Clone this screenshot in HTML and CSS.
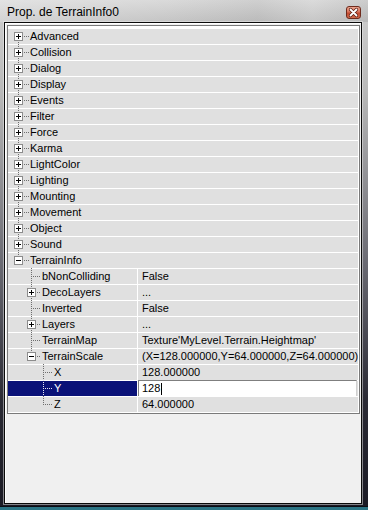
FILE: index.html
```html
<!DOCTYPE html>
<html>
<head>
<meta charset="utf-8">
<title>Prop. de TerrainInfo0</title>
<link rel="stylesheet" href="styles.css">
</head>
<body>
<svg class="defs" width="0" height="0" aria-hidden="true">
  <defs>
    <g id="bp"><rect x=".5" y=".5" width="8" height="8" fill="#fff" stroke="#8c8c8c"/><path d="M2 4.5h5M4.5 2v5" stroke="#000"/></g>
    <g id="bm"><rect x=".5" y=".5" width="8" height="8" fill="#fff" stroke="#8c8c8c"/><path d="M2 4.5h5" stroke="#000"/></g>
  </defs>
</svg>
<div class="window">
  <div class="titlebar">
    <span class="title">Prop. de TerrainInfo0</span>
    <span class="close"><svg width="13" height="11" viewBox="0 0 13 11"><path d="M3.5 2.5l6 6M9.5 2.5l-6 6" stroke="#5a1c10" stroke-width="3.2" stroke-linecap="round"/><path d="M3.5 2.5l6 6M9.5 2.5l-6 6" stroke="#fff" stroke-width="1.8" stroke-linecap="round"/></svg></span>
  </div>
  <div class="client">
    <div class="list">
      <div class="row"><svg class="g g0"><path class="dl" d="M10.5 13V15M16 7.5h5"/><use href="#bp" x="6" y="3"/></svg><span>Advanced</span></div>
      <div class="row"><svg class="g g0"><path class="dl" d="M10.5 -1V3M10.5 13V15M16 7.5h5"/><use href="#bp" x="6" y="3"/></svg><span>Collision</span></div>
      <div class="row"><svg class="g g0"><path class="dl" d="M10.5 -1V3M10.5 13V15M16 7.5h5"/><use href="#bp" x="6" y="3"/></svg><span>Dialog</span></div>
      <div class="row"><svg class="g g0"><path class="dl" d="M10.5 -1V3M10.5 13V15M16 7.5h5"/><use href="#bp" x="6" y="3"/></svg><span>Display</span></div>
      <div class="row"><svg class="g g0"><path class="dl" d="M10.5 -1V3M10.5 13V15M16 7.5h5"/><use href="#bp" x="6" y="3"/></svg><span>Events</span></div>
      <div class="row"><svg class="g g0"><path class="dl" d="M10.5 -1V3M10.5 13V15M16 7.5h5"/><use href="#bp" x="6" y="3"/></svg><span>Filter</span></div>
      <div class="row"><svg class="g g0"><path class="dl" d="M10.5 -1V3M10.5 13V15M16 7.5h5"/><use href="#bp" x="6" y="3"/></svg><span>Force</span></div>
      <div class="row"><svg class="g g0"><path class="dl" d="M10.5 -1V3M10.5 13V15M16 7.5h5"/><use href="#bp" x="6" y="3"/></svg><span>Karma</span></div>
      <div class="row"><svg class="g g0"><path class="dl" d="M10.5 -1V3M10.5 13V15M16 7.5h5"/><use href="#bp" x="6" y="3"/></svg><span>LightColor</span></div>
      <div class="row"><svg class="g g0"><path class="dl" d="M10.5 -1V3M10.5 13V15M16 7.5h5"/><use href="#bp" x="6" y="3"/></svg><span>Lighting</span></div>
      <div class="row"><svg class="g g0"><path class="dl" d="M10.5 -1V3M10.5 13V15M16 7.5h5"/><use href="#bp" x="6" y="3"/></svg><span>Mounting</span></div>
      <div class="row"><svg class="g g0"><path class="dl" d="M10.5 -1V3M10.5 13V15M16 7.5h5"/><use href="#bp" x="6" y="3"/></svg><span>Movement</span></div>
      <div class="row"><svg class="g g0"><path class="dl" d="M10.5 -1V3M10.5 13V15M16 7.5h5"/><use href="#bp" x="6" y="3"/></svg><span>Object</span></div>
      <div class="row"><svg class="g g0"><path class="dl" d="M10.5 -1V3M10.5 13V15M16 7.5h5"/><use href="#bp" x="6" y="3"/></svg><span>Sound</span></div>
      <div class="row"><svg class="g g0"><path class="dl" d="M10.5 -1V3M16 7.5h5"/><use href="#bm" x="6" y="3"/></svg><span>TerrainInfo</span></div>

      <div class="row prop"><div class="name"><svg class="g g1"><path class="dl" d="M23.5 -1V15M25 7.5h8"/></svg><span>bNonColliding</span></div><div class="value">False</div></div>
      <div class="row prop"><div class="name"><svg class="g g1"><path class="dl" d="M23.5 -1V3M23.5 13V15M29 7.5h4"/><use href="#bp" x="19" y="3"/></svg><span>DecoLayers</span></div><div class="value">...</div></div>
      <div class="row prop"><div class="name"><svg class="g g1"><path class="dl" d="M23.5 -1V15M25 7.5h8"/></svg><span>Inverted</span></div><div class="value">False</div></div>
      <div class="row prop"><div class="name"><svg class="g g1"><path class="dl" d="M23.5 -1V3M23.5 13V15M29 7.5h4"/><use href="#bp" x="19" y="3"/></svg><span>Layers</span></div><div class="value">...</div></div>
      <div class="row prop"><div class="name"><svg class="g g1"><path class="dl" d="M23.5 -1V15M25 7.5h8"/></svg><span>TerrainMap</span></div><div class="value">Texture'MyLevel.Terrain.Heightmap'</div></div>
      <div class="row prop"><div class="name"><svg class="g g1"><path class="dl" d="M23.5 -1V3M29 7.5h4"/><use href="#bm" x="19" y="3"/></svg><span>TerrainScale</span></div><div class="value">(X=128.000000,Y=64.000000,Z=64.000000)</div></div>
      <div class="row prop"><div class="name"><svg class="g g2"><path class="dl" d="M35.5 -1V15M37 7.5h8"/></svg><span>X</span></div><div class="value">128.000000</div></div>
      <div class="row prop sel"><div class="name"><svg class="g g2"><path class="dl" d="M35.5 -1V15M37 7.5h8"/></svg><span>Y</span></div><div class="value edit">128<span class="caret"></span></div></div>
      <div class="row prop"><div class="name"><svg class="g g2"><path class="dl" d="M35.5 -1V8M37 7.5h8"/></svg><span>Z</span></div><div class="value">64.000000</div></div>
    </div>
  </div>
</div>
</body>
</html>
```

FILE: styles.css
```css
html, body {
  margin: 0;
  padding: 0;
}
body {
  background: #2b7484;
  width: 368px;
  height: 510px;
  overflow: hidden;
}
.defs {
  position: absolute;
  width: 0;
  height: 0;
}
.window {
  width: 368px;
  height: 507px;
  box-sizing: border-box;
  padding: 0 6px 3px 4px;
  display: flex;
  flex-direction: column;
  background: linear-gradient(180deg, #cfcfcf 0, #b9b9b9 90px, #6c6c74 260px, #2a2a34 400px, #1a1a24 507px);
  box-shadow: inset 0 -1px 0 #0c0c14;
}
.titlebar {
  height: 22px;
  margin: 0 -6px 0 -4px;
  padding: 0 7px 0 7px;
  box-sizing: border-box;
  display: flex;
  justify-content: space-between;
  align-items: flex-start;
  background:
    linear-gradient(90deg, rgba(255,255,255,0.28) 0, rgba(255,255,255,0.05) 45%, rgba(0,0,0,0.04) 70%, rgba(255,255,255,0.08) 85%, rgba(0,0,0,0.05) 100%),
    linear-gradient(180deg, #d8d8d8, #c2c2c2);
}
.title {
  font: 12px "Liberation Sans", Arial, sans-serif;
  color: #000;
  line-height: 19px;
  padding-top: 3px;
}
.close {
  width: 15px;
  height: 13px;
  margin-top: 6px;
  box-sizing: border-box;
  border: 1px solid #6e2a1c;
  border-radius: 3px;
  background: linear-gradient(180deg, #eba48f 0, #d9735a 45%, #c24a30 55%, #cf6a4c 100%);
  display: flex;
  align-items: center;
  justify-content: center;
}
.close svg {
  display: block;
}
.client {
  flex: 1;
  border: 1px solid #0a0a0a;
  background: #f0f0f0;
  box-shadow: inset 1px 1px 0 #fff, 0 0 0 1px rgba(235,235,235,0.5);
  display: flex;
  flex-direction: column;
  align-items: flex-start;
}
.list {
  margin: 2px 0 0 2px;
  width: 353px;
  box-sizing: border-box;
  border: 1px solid #7a7a7a;
  padding: 2px 1px 1px 0;
  background: #fff;
}
.row {
  display: flex;
  align-items: center;
  height: 15px;
  border-top: 1px solid #fff;
  background: #e0e0e0;
  font: 11px "Liberation Sans", Arial, sans-serif;
  line-height: 15px;
  color: #000;
  white-space: nowrap;
}
.g {
  flex: none;
  height: 15px;
  overflow: visible;
  color: #6e6e6e;
}
.g0 { width: 22px; }
.g1 { width: 34px; }
.g2 { width: 46px; }
.dl {
  fill: none;
  stroke: currentColor;
  stroke-width: 1;
  stroke-dasharray: 1 1;
  shape-rendering: crispEdges;
}
.name {
  width: 129px;
  height: 15px;
  flex: none;
  display: flex;
  align-items: center;
  border-right: 1px solid #fff;
}
.value {
  flex: 1;
  height: 15px;
  padding-left: 4px;
  overflow: hidden;
}
.sel .name {
  background: #0a1278;
  color: #fff;
}
.sel .name .g {
  color: #e8e8f4;
}
.value.edit {
  height: 15px;
  margin-top: -1px;
  margin-right: 1px;
  padding-left: 3px;
  background: #fff;
  border-top: 1px solid #7f7f7f;
  border-left: 1px solid #7f7f7f;
  border-right: 1px solid #d0d0d0;
  display: flex;
  align-items: center;
}
.caret {
  display: inline-block;
  width: 1px;
  height: 12px;
  margin-left: 1px;
  background: #000;
}
```
